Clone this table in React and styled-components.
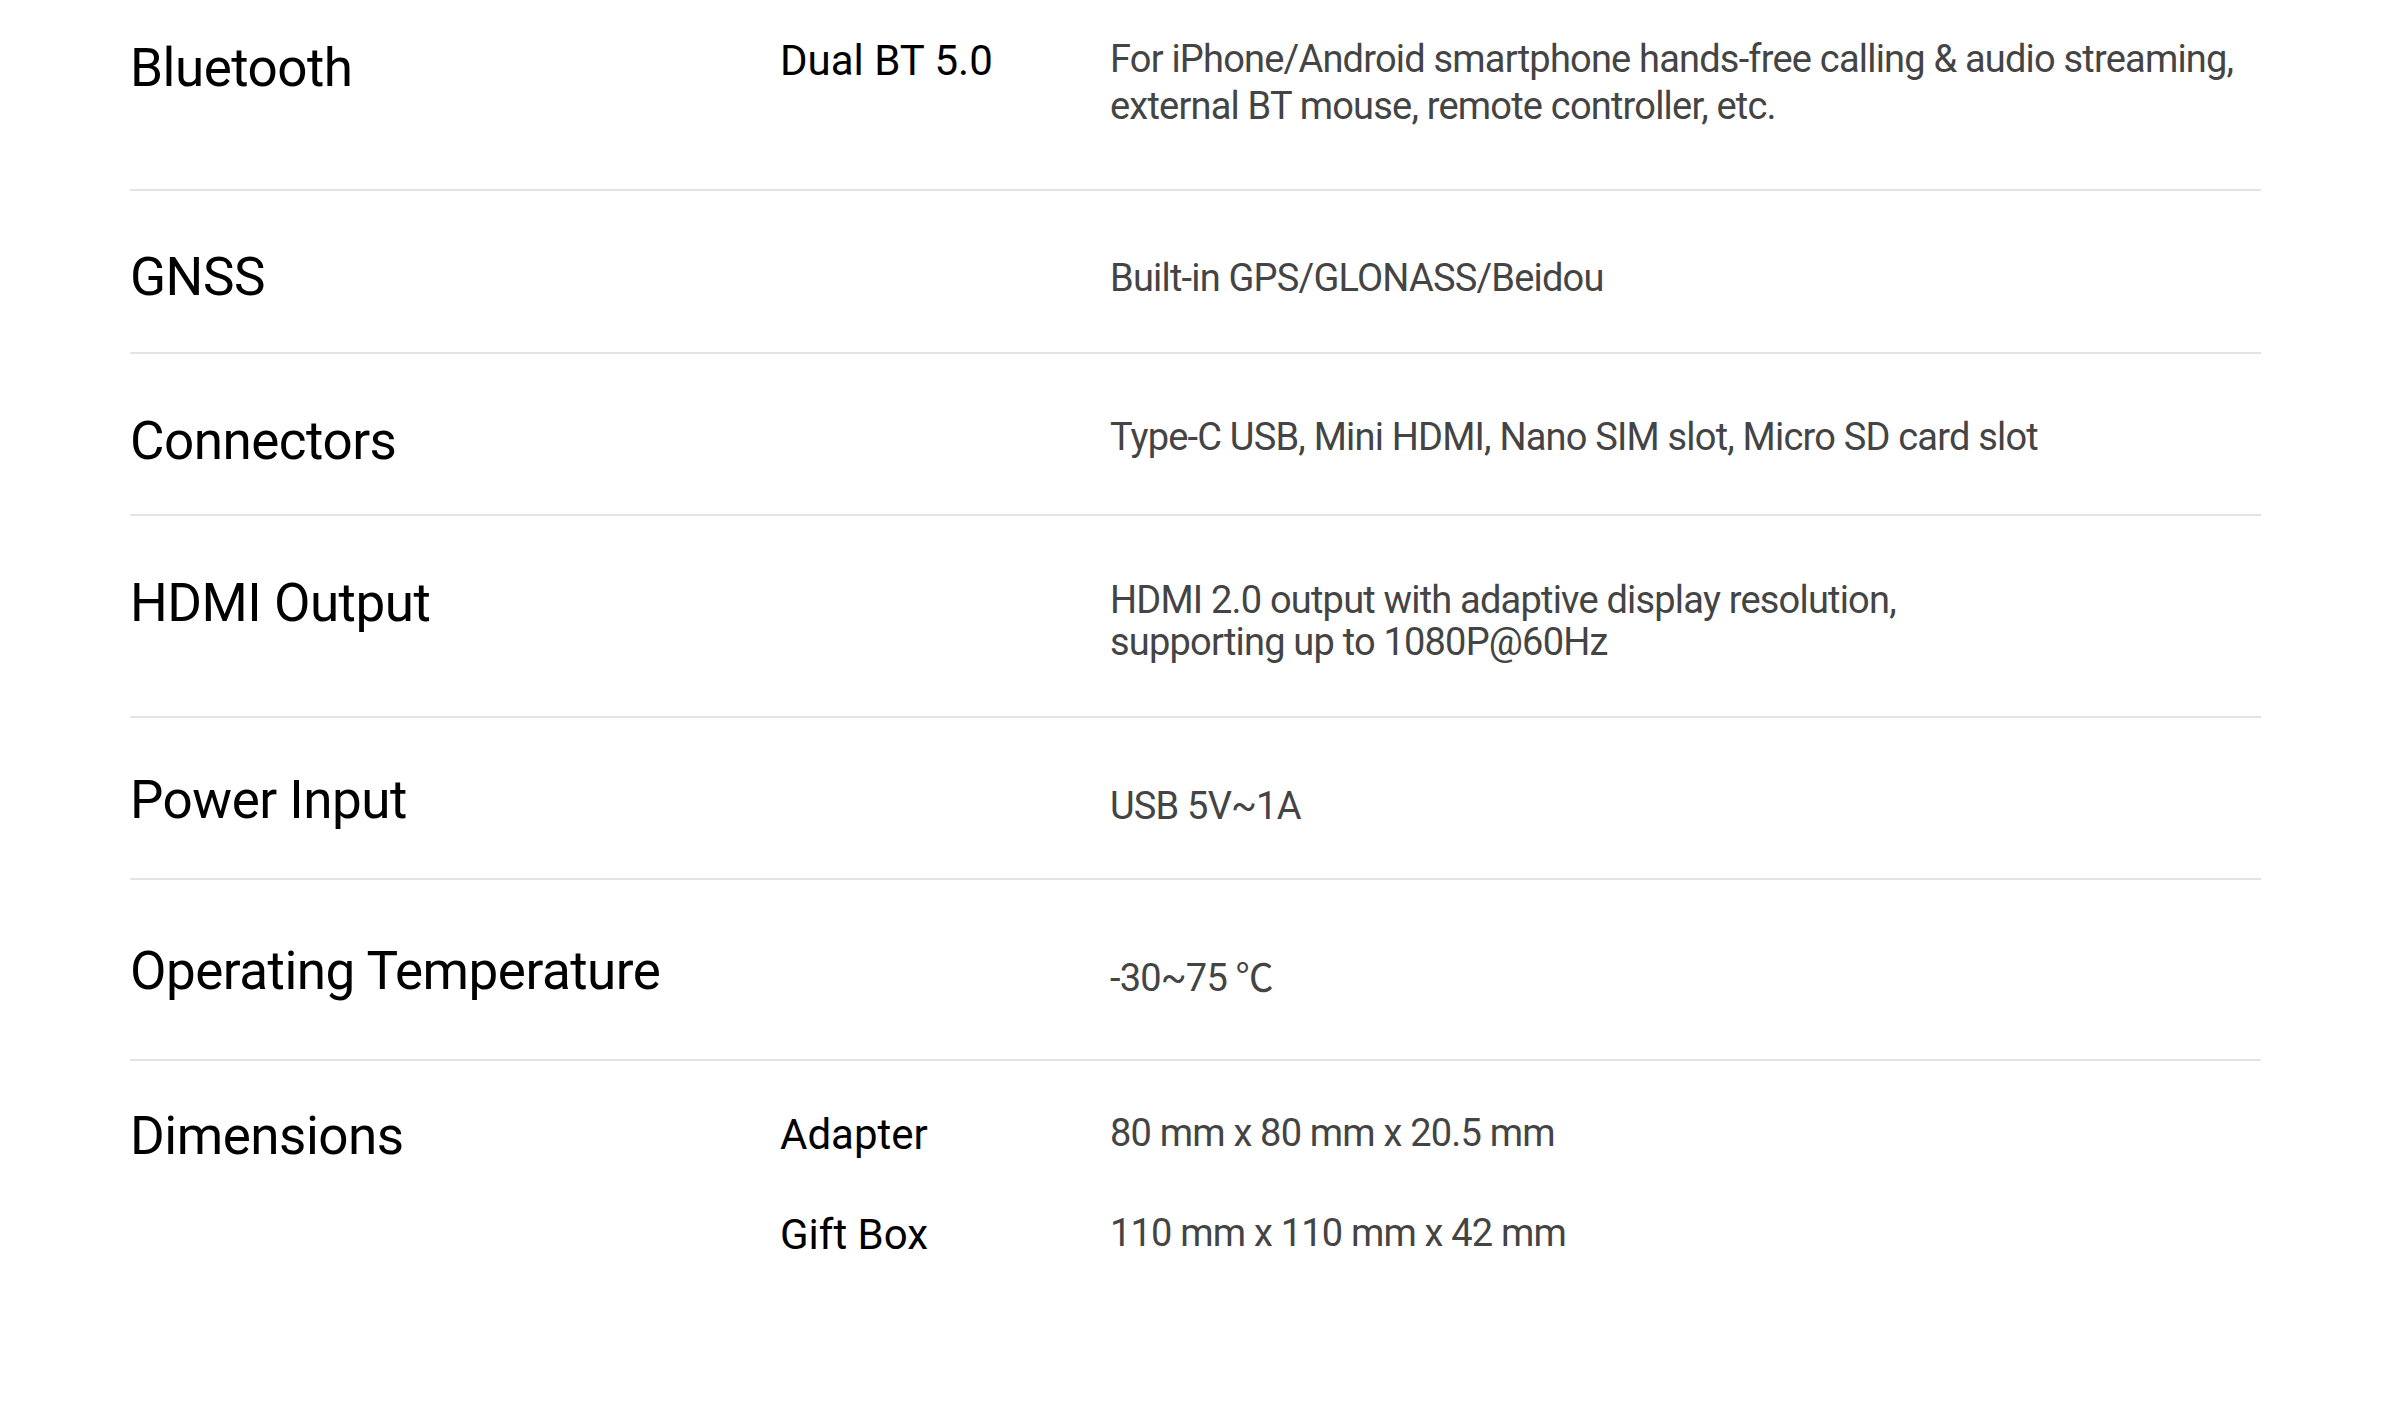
import React from 'react'
import styled, { createGlobalStyle } from 'styled-components'

const specs = [
  {
    label: 'Bluetooth',
    padTop: 36, padBottom: 59, shift: 0,
    items: [
      { name: 'Dual BT 5.0', text: 'For iPhone/Android smartphone hands-free calling & audio streaming,\nexternal BT mouse, remote controller, etc.' },
    ],
  },
  {
    label: 'GNSS',
    padTop: 54, padBottom: 42, shift: 10,
    items: [{ text: 'Built-in GPS/GLONASS/Beidou' }],
  },
  {
    label: 'Connectors',
    padTop: 55, padBottom: 40, shift: 5,
    items: [{ text: 'Type-C USB, Mini HDMI, Nano SIM slot, Micro SD card slot' }],
  },
  {
    label: 'HDMI Output',
    padTop: 55, padBottom: 53, shift: 8, tight: true,
    items: [{ text: 'HDMI 2.0 output with adaptive display resolution,\nsupporting up to 1080P@60Hz' }],
  },
  {
    label: 'Power Input',
    padTop: 50, padBottom: 45, shift: 15,
    items: [{ text: 'USB 5V~1A' }],
  },
  {
    label: 'Operating Temperature',
    padTop: 59, padBottom: 55, shift: 16,
    items: [{ text: '-30~75 ℃' }],
  },
  {
    label: 'Dimensions',
    padTop: 43, padBottom: 80, shift: 6,
    items: [
      { name: 'Adapter', text: '80 mm x 80 mm x 20.5 mm' },
      { name: 'Gift Box', text: '110 mm x 110 mm x 42 mm' },
    ],
  },
]

const App = () => {
  return (
    <>
      <GlobalStyle />
      <SpecTable>
        {specs.map((row, i) => (
          <SpecRow key={row.label} padTop={row.padTop} padBottom={row.padBottom} last={i === specs.length - 1}>
            <Label>{row.label}</Label>
            <Details shift={row.shift}>
              {row.items.map((item, j) => (
                <DetailRow key={j}>
                  <SubLabel>{item.name || ''}</SubLabel>
                  <Desc tight={row.tight}>{item.text}</Desc>
                </DetailRow>
              ))}
            </Details>
          </SpecRow>
        ))}
      </SpecTable>
    </>
  )
}

const GlobalStyle = createGlobalStyle`
  html, body {
    margin: 0;
    padding: 0;
    background: #ffffff;
  }
  body {
    font-family: Roboto, 'Noto Sans CJK SC', sans-serif;
  }
`

const SpecTable = styled.div`
  width: 2131px;
  margin-left: 130px;
  display: flex;
  flex-direction: column;
`

const SpecRow = styled.div.withConfig({ shouldForwardProp: p => !['padTop', 'padBottom', 'last'].includes(p) })`
  display: grid;
  grid-template-columns: 650px 1fr;
  align-items: start;
  padding: ${props => props.padTop}px 0 ${props => props.padBottom}px;
  border-bottom: ${props => (props.last ? 'none' : '2px solid #e3e3e3')};
`

const Label = styled.div`
  font-size: 53px;
  line-height: 65px;
  letter-spacing: -0.5px;
  color: #000000;
  font-weight: 400;
`

const Details = styled.div.withConfig({ shouldForwardProp: p => p !== 'shift' })`
  display: flex;
  flex-direction: column;
  gap: 50px;
  margin-top: ${props => props.shift}px;
`

const DetailRow = styled.div`
  display: grid;
  grid-template-columns: 330px 1fr;
  align-items: start;
`

const SubLabel = styled.div`
  font-size: 42px;
  line-height: 50px;
  color: #000000;
`

const Desc = styled.div.withConfig({ shouldForwardProp: p => p !== 'tight' })`
  font-size: 38px;
  line-height: ${props => (props.tight ? '42px' : '47px')};
  letter-spacing: -0.8px;
  color: #444444;
  white-space: pre-line;
`

export default App
